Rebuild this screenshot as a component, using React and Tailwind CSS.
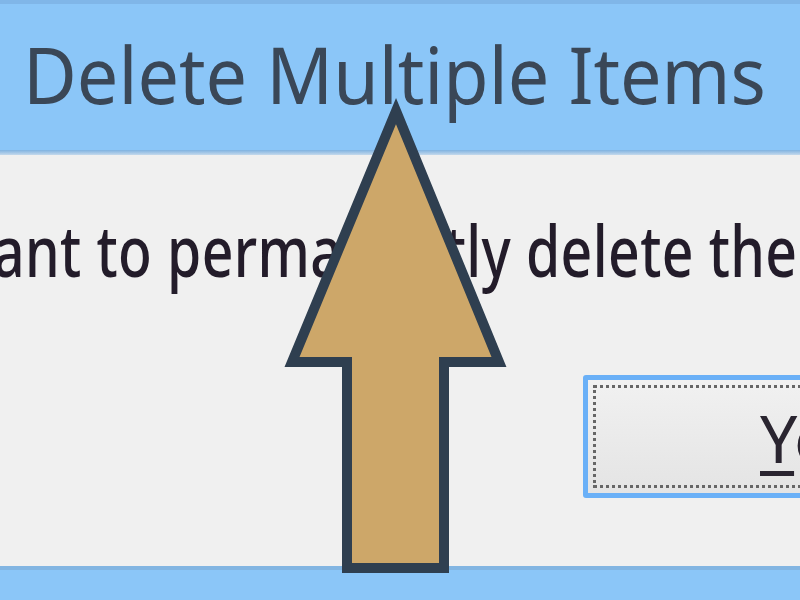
export default function App() {
  const font = { fontFamily: '"Noto Sans", "Open Sans", sans-serif' }
  return (
    <div className="relative w-[800px] h-[600px] overflow-hidden flex flex-col bg-[#f0f0f0]">
      {/* title bar */}
      <div className="h-[4px] bg-[#80b6e8]" />
      <div className="h-[146px] bg-[#8bc6f8] flex items-start pl-[23px] pt-[31px]">
        <span className="inline-block origin-left scale-x-[0.945] text-[78px] leading-none text-[#3a4757] whitespace-nowrap" style={font}>
          Delete Multiple Items
        </span>
      </div>
      <div className="h-[5px] bg-gradient-to-b from-[#7fb2e0] to-[#c4d9ec]" />

      {/* message body */}
      <div className="flex-1 flex flex-col">
        <div className="pt-[60px] -ml-[7px] whitespace-nowrap">
          <span className="inline-block origin-left scale-x-[0.79] text-[70px] font-medium tracking-[0.5px] leading-none text-[#231c2a]" style={font}>
            ant to permanently delete these items?
          </span>
        </div>
        <div className="flex justify-start pl-[583px] pt-[90px]">
          <button className="w-[260px] h-[123px] shrink-0 border-[5px] border-[#6ab0f7] rounded-[3px] bg-gradient-to-b from-[#f1f1f1] to-[#e4e4e4] p-[5px]">
            <div className="w-full h-full border-[3px] border-dotted border-[#666] flex items-center pl-[164px]">
              <span className="text-[66px] leading-none text-[#2a2530]" style={font}>
                <span className="underline decoration-[5px] underline-offset-[8px]">Y</span>es
              </span>
            </div>
          </button>
        </div>
      </div>

      {/* bottom bar */}
      <div className="h-[4px] bg-[#82b5e2]" />
      <div className="h-[30px] bg-[#8bc6f8]" />

      {/* overlay arrow */}
      <svg className="absolute inset-0 pointer-events-none" width="800" height="600" viewBox="0 0 800 600">
        <polygon
          points="396,111 499,362 444,362 444,568 347,568 347,362 292,362"
          fill="#cda769"
          stroke="#2f3f50"
          strokeWidth="10"
          strokeLinejoin="miter"
          strokeMiterlimit="10"
        />
      </svg>
    </div>
  )
}
